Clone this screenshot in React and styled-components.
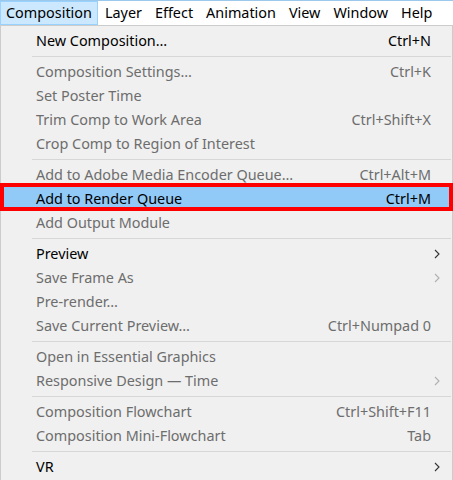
import React from "react";
import styled, { createGlobalStyle } from "styled-components";

const GlobalStyle = createGlobalStyle`
  html, body {
    margin: 0;
    padding: 0;
    background: #ffffff;
  }
  * {
    box-sizing: border-box;
  }
`;

const Screen = styled.div`
  width: 453px;
  height: 480px;
  overflow: hidden;
  font-family: "Noto Sans", "Open Sans", sans-serif;
  font-size: 14.4px;
  color: #000000;
  background: #ffffff;
`;

const MenuBar = styled.div`
  display: flex;
  height: 25px;
  border-top: 1px solid #9cc8ec;
  background: #ffffff;
`;

const BarItem = styled.div`
  display: flex;
  align-items: center;
  padding: 0 5px 1px 5px;
  margin-right: 1px;
  border: 1px solid ${(p) => (p.$open ? "#99d1ff" : "transparent")};
  background: ${(p) => (p.$open ? "#cce8ff" : "transparent")};
  white-space: nowrap;
`;

const Panel = styled.div`
  border: 1px solid #cccccc;
  background: #f0f0f0;
  padding: 3px 0 0;
  height: 460px;
`;

const Row = styled.div`
  position: relative;
  display: grid;
  grid-template-columns: 35px 1fr auto 21px;
  align-items: center;
  height: 24px;
  padding-bottom: 1px;
  color: ${(p) => (p.$disabled ? "#6d6d6d" : "#000000")};
  background: ${(p) => (p.$active ? "#91c9f7" : "transparent")};
`;

const Label = styled.span`
  grid-column: 2;
  white-space: nowrap;
`;

const Shortcut = styled.span`
  grid-column: 3;
  white-space: nowrap;
  padding-left: 20px;
`;

const ArrowCell = styled.span`
  grid-column: 4;
  display: flex;
  align-items: center;
  padding-left: 3px;
`;

const Separator = styled.div`
  height: 7px;
  display: flex;
  align-items: center;
  padding-left: 31px;
  padding-right: 1px;

  &::after {
    content: "";
    flex: 1;
    height: 1px;
    background: #d7d7d7;
  }
`;

const Callout = styled.div`
  position: absolute;
  left: -1px;
  right: -1px;
  top: -4px;
  bottom: 0;
  border: 4px solid #ff0000;
  pointer-events: none;
`;

const Chevron = ({ color }) => (
  <svg width="6" height="10" viewBox="0 0 6 10">
    <polyline points="1,1 5,5 1,9" fill="none" stroke={color} strokeWidth="1.1" />
  </svg>
);

const menuBar = ["Composition", "Layer", "Effect", "Animation", "View", "Window", "Help"];

const items = [
  { label: "New Composition\u2026", key: "Ctrl+N" },
  "-",
  { label: "Composition Settings\u2026", key: "Ctrl+K", off: true },
  { label: "Set Poster Time", off: true },
  { label: "Trim Comp to Work Area", key: "Ctrl+Shift+X", off: true },
  { label: "Crop Comp to Region of Interest", off: true },
  "-",
  { label: "Add to Adobe Media Encoder Queue\u2026", key: "Ctrl+Alt+M", off: true },
  { label: "Add to Render Queue", key: "Ctrl+M", active: true },
  { label: "Add Output Module", off: true },
  "-",
  { label: "Preview", sub: true },
  { label: "Save Frame As", sub: true, off: true },
  { label: "Pre-render\u2026", off: true },
  { label: "Save Current Preview\u2026", key: "Ctrl+Numpad 0", off: true },
  "-",
  { label: "Open in Essential Graphics", off: true },
  { label: "Responsive Design \u2014 Time", sub: true, off: true },
  "-",
  { label: "Composition Flowchart", key: "Ctrl+Shift+F11", off: true },
  { label: "Composition Mini-Flowchart", key: "Tab", off: true },
  "-",
  { label: "VR", sub: true },
];

export default function App() {
  return (
    <Screen>
      <GlobalStyle />
      <MenuBar>
        {menuBar.map((name, i) => (
          <BarItem key={name} $open={i === 0}>
            {name}
          </BarItem>
        ))}
      </MenuBar>
      <Panel>
        {items.map((item, i) =>
          item === "-" ? (
            <Separator key={i} />
          ) : (
            <Row key={i} $disabled={item.off} $active={item.active}>
              <Label>{item.label}</Label>
              {item.key && <Shortcut>{item.key}</Shortcut>}
              {item.sub && (
                <ArrowCell>
                  <Chevron color={item.off ? "#b0b0b0" : "#333333"} />
                </ArrowCell>
              )}
              {item.active && <Callout />}
            </Row>
          )
        )}
      </Panel>
    </Screen>
  );
}
